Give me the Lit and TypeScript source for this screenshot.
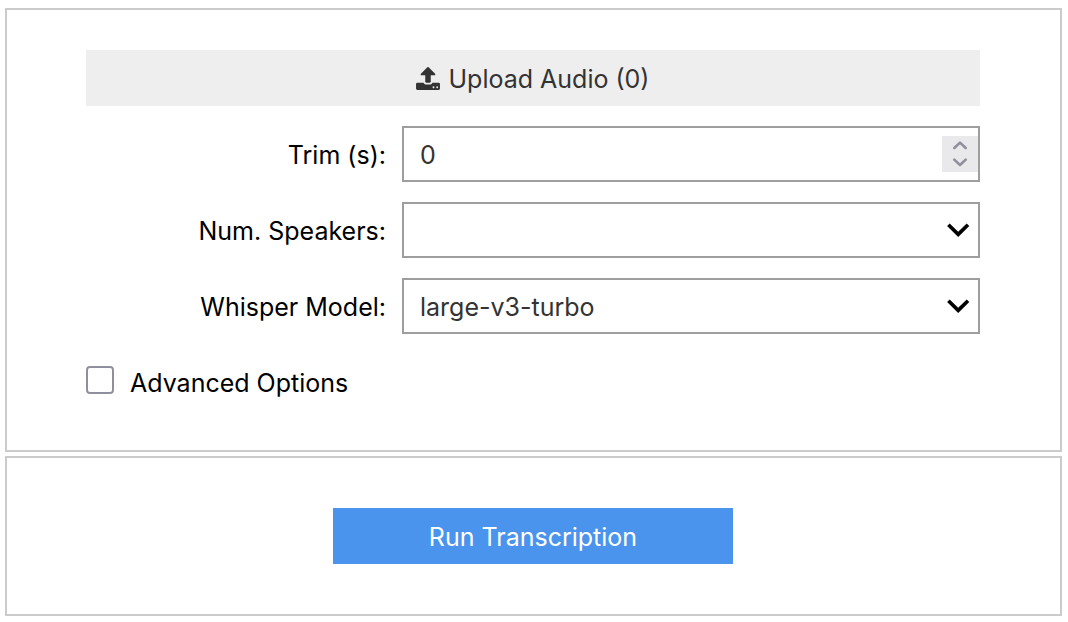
import { LitElement, html, css } from "lit";
import { customElement, state } from "lit/decorators.js";

@customElement("app-root")
export class AppRoot extends LitElement {
  @state() private trim = 0;

  static styles = css`
    :host {
      display: block;
      padding: 8px 6px 6px 5px;
      background: #fff;
      color: #000;
      font-family: Inter, "Liberation Sans", sans-serif;
      font-size: 25px;
      line-height: 32px;
    }
    * {
      box-sizing: border-box;
    }
    button,
    input,
    select {
      margin: 0;
      padding: 0;
      border: 0;
      border-radius: 0;
      background: none;
      color: inherit;
      font: inherit;
    }
    .panels {
      display: flex;
      flex-direction: column;
      gap: 4px;
    }
    .panel {
      display: flex;
      flex-direction: column;
      gap: 20px;
      padding: 40px 80px 40px 79px;
      border: 2px solid #cbcbcb;
    }
    .actions {
      align-items: center;
      padding-top: 50px;
      padding-bottom: 50px;
    }
    .btn {
      display: flex;
      align-items: center;
      justify-content: center;
      gap: 8px;
      height: 56px;
      background: #eee;
      color: #333;
    }
    .btn span,
    label {
      padding-top: 2px;
    }
    .primary {
      width: 400px;
      max-width: 100%;
      background: #4a94ed;
      color: #fff;
    }
    .upload-icon {
      width: 24px;
      height: 23px;
      fill: currentColor;
    }
    .row {
      display: grid;
      grid-template-columns: 300px minmax(0, 1fr);
      column-gap: 16px;
      align-items: center;
    }
    .row > label {
      text-align: right;
    }
    .field {
      display: grid;
      grid-template-columns: minmax(0, 1fr) 36px;
      align-items: center;
      height: 56px;
      border: 2px solid #9e9e9e;
      color: #333;
    }
    .field input {
      height: 52px;
      padding: 2px 0 0 16px;
      appearance: textfield;
    }
    .field input::-webkit-inner-spin-button {
      appearance: none;
    }
    .field select {
      grid-area: 1 / 1 / 2 / 3;
      width: 100%;
      height: 52px;
      padding: 2px 40px 0 16px;
      appearance: none;
    }
    .chevron {
      grid-area: 1 / 2;
      width: 24px;
      height: 16px;
      margin-left: 4px;
      fill: none;
      stroke: #000;
      stroke-width: 3.7;
      pointer-events: none;
    }
    .spinner {
      display: flex;
      flex-direction: column;
      height: 36px;
      background: #e9e9eb;
      color: #8f8f9d;
    }
    .spinner button {
      display: flex;
      align-items: center;
      justify-content: center;
      height: 18px;
    }
    .spinner svg {
      width: 16px;
      height: 10px;
      fill: none;
      stroke: currentColor;
      stroke-width: 2.6;
      stroke-linecap: round;
      stroke-linejoin: round;
    }
    .check {
      display: flex;
      align-items: center;
      gap: 16px;
      height: 56px;
    }
    .check input {
      width: 28px;
      height: 28px;
      margin-bottom: 4px;
      border: 2px solid #8f8f9d;
      border-radius: 4px;
      appearance: none;
    }
    .check input:checked {
      background: #4a94ed;
    }
  `;

  private chevron() {
    return html`<svg class="chevron" viewBox="0 0 24 16" aria-hidden="true">
      <path d="M2.4 2.8 12.2 12.4 22 2.8" />
    </svg>`;
  }

  render() {
    return html`
      <main class="panels">
        <section class="panel">
          <button class="btn" type="button">
            <svg class="upload-icon" viewBox="64 64 1664 1600" aria-hidden="true">
              <path
                d="M1344 1472q0-26-19-45t-45-19-45 19-19 45 19 45 45 19 45-19 19-45zm256 0q0-26-19-45t-45-19-45 19-19 45 19 45 45 19 45-19 19-45zm128-224v320q0 40-28 68t-68 28h-1472q-40 0-68-28t-28-68v-320q0-40 28-68t68-28h427q21 56 70.5 92t110.5 36h256q61 0 110.5-36t70.5-92h427q40 0 68 28t28 68zm-325-648q-17 40-59 40h-256v448q0 26-19 45t-45 19h-256q-26 0-45-19t-19-45v-448h-256q-42 0-59-40-17-39 14-69l448-448q18-19 45-19t45 19l448 448q31 30 14 69z"
              />
            </svg>
            <span>Upload Audio (0)</span>
          </button>
          <div class="row">
            <label for="trim">Trim (s):</label>
            <div class="field">
              <input
                id="trim"
                type="number"
                min="0"
                .value=${String(this.trim)}
                @input=${(e: Event) => (this.trim = Number((e.target as HTMLInputElement).value))}
              />
              <div class="spinner">
                <button type="button" aria-label="Increase" @click=${() => this.trim++}>
                  <svg viewBox="0 0 16 10"><path d="M2.3 8 8 2.6 13.7 8" /></svg>
                </button>
                <button
                  type="button"
                  aria-label="Decrease"
                  @click=${() => (this.trim = Math.max(0, this.trim - 1))}
                >
                  <svg viewBox="0 0 16 10"><path d="M2.3 1.6 8 7 13.7 1.6" /></svg>
                </button>
              </div>
            </div>
          </div>
          <div class="row">
            <label for="speakers">Num. Speakers:</label>
            <div class="field">
              <select id="speakers">
                <option value=""></option>
              </select>
              ${this.chevron()}
            </div>
          </div>
          <div class="row">
            <label for="model">Whisper Model:</label>
            <div class="field">
              <select id="model">
                <option>large-v3-turbo</option>
              </select>
              ${this.chevron()}
            </div>
          </div>
          <div class="check">
            <input id="advanced" type="checkbox" />
            <label for="advanced">Advanced Options</label>
          </div>
        </section>
        <section class="panel actions">
          <button class="btn primary" type="button"><span>Run Transcription</span></button>
        </section>
      </main>
    `;
  }
}
